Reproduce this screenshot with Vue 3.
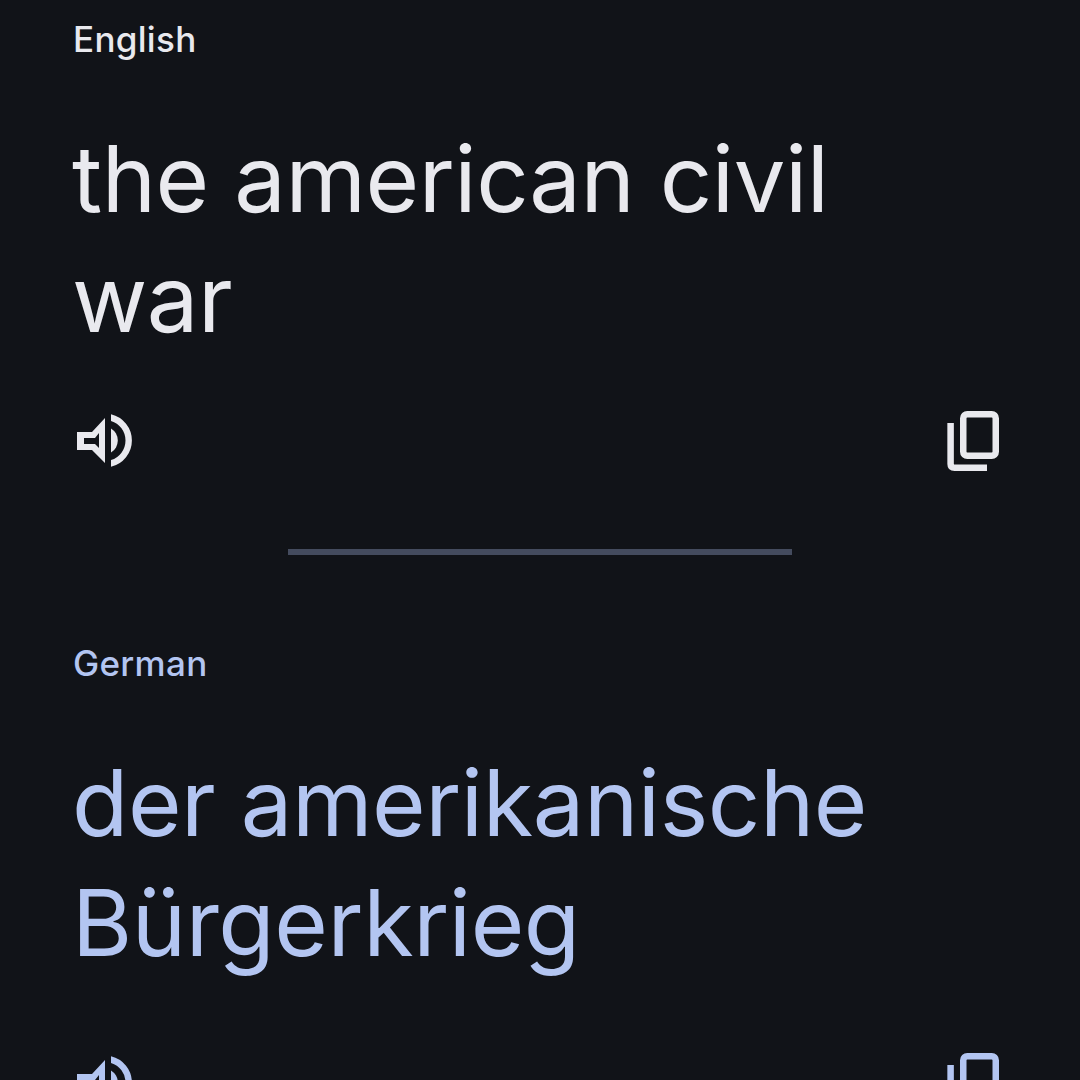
<script setup>
const blocks = [
  { id: 'src', lang: 'English', lines: ['the american civil', 'war'] },
  { id: 'dst', lang: 'German', lines: ['der amerikanische', 'Bürgerkrieg'] },
];
</script>

<template>
  <div class="page">
    <template v-for="(b, i) in blocks" :key="b.id">
      <div v-if="i > 0" class="divider"></div>
      <section class="block" :class="b.id">
        <div class="lang">{{ b.lang }}</div>
        <div class="text">
          <div v-for="l in b.lines" :key="l">{{ l }}</div>
        </div>
        <div class="actions">
          <svg class="icon" width="60" height="60" viewBox="0 0 60 60" fill="currentColor">
            <path fill-rule="evenodd" d="M4 22H19L32 8V53L19 40H4ZM11 28V34H22L26 38V23L22 28Z" />
            <path d="M38 18.5A14 14 0 0 1 38 42.5Z" />
            <path d="M38 4.2A27 27 0 0 1 38 56.8V50.1A20.5 20.5 0 0 0 38 10.9Z" />
          </svg>
          <svg class="icon" width="60" height="66" viewBox="0 0 60 66" fill="none" stroke="currentColor" stroke-width="6.5">
            <rect x="17.25" y="4.25" width="32.5" height="41.5" rx="4" />
            <path d="M4.6 13V54Q4.6 57.75 8.6 57.75H41" />
          </svg>
        </div>
      </section>
    </template>
  </div>
</template>

<style scoped>
.page {
  height: 1080px;
  overflow: hidden;
  background: #111318;
  color: #e9e9ee;
  font-family: Inter, "Noto Sans", sans-serif;
}
.block {
  padding: 0 73px;
}
.lang {
  font-size: 35px;
  font-weight: 500;
  letter-spacing: 0.3px;
  line-height: 48px;
  padding-top: 15px;
}
.text {
  margin: 56px 0 0 -1px;
  font-size: 92px;
  letter-spacing: -0.45px;
  line-height: 120px;
}
.actions {
  display: flex;
  justify-content: space-between;
  align-items: flex-start;
  margin-top: 51px;
  margin-right: 1px;
}
.icon {
  display: block;
  flex: none;
}
.divider {
  width: 504px;
  height: 6px;
  margin: 73px auto 0;
  background: #444b5e;
}
.dst {
  padding-top: 69px;
  color: #b3c5f1;
}
.dst .actions {
  margin-top: 69px;
}
</style>

<style>
html, body {
  margin: 0;
  background: #111318;
}
</style>
